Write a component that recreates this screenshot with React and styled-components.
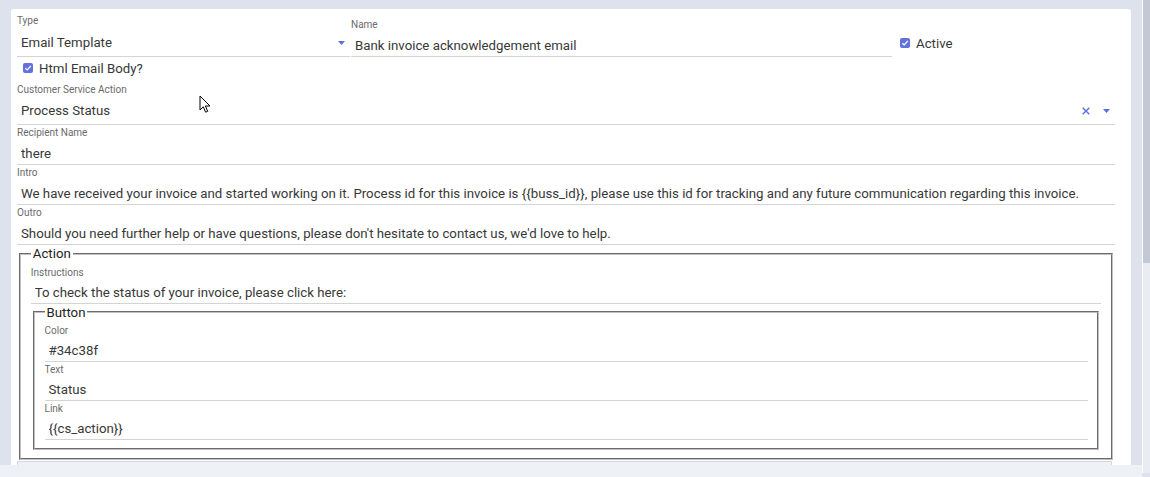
import React from "react";
import styled, { createGlobalStyle } from "styled-components";

const GlobalStyle = createGlobalStyle`
  html, body { margin: 0; padding: 0; }
  body {
    background: #dee2ec;
    font-family: Roboto, "Liberation Sans", Arial, sans-serif;
    overflow: hidden;
  }
`;

const Page = styled.div`
  display: flex;
  height: 477px;
  overflow: hidden;
`;

const Main = styled.div`
  flex: 1;
  min-width: 0;
  padding: 9px 11px 0 11px;
  overflow: hidden;
`;

const Card = styled.div`
  position: relative;
  background: #ffffff;
  border-radius: 3px 3px 0 0;
  padding: 6px 16px 0 6px;
`;

const Row = styled.div`
  display: flex;
  align-items: flex-end;
`;

const Field = styled.div`
  flex: ${(p) => (p.$width ? `0 0 ${p.$width}px` : "1 1 auto")};
  margin-left: ${(p) => p.$ml || 0}px;
  margin-bottom: 1px;
  min-width: 0;
  &:last-child {
    margin-bottom: ${(p) => (p.$nested ? 0 : 1)}px;
  }
`;

const Label = styled.div`
  padding-top: ${(p) => (p.$tight ? 0 : 1)}px;
  font-size: 10px;
  line-height: 12px;
  color: #6b6b6b;
  white-space: nowrap;
`;

const Value = styled.div`
  display: flex;
  align-items: center;
  border-bottom: 1px solid #d4d4d4;
  padding: ${(p) => (p.$nested ? 4 : p.$tight ? 6 : 5)}px 5px ${(p) => (p.$select ? 3 : 0)}px 4px;
  line-height: 20px;
  font-size: 13.25px;
  color: #383838;
  white-space: nowrap;
`;

const ValueText = styled.span`
  flex: 1;
  overflow: hidden;
`;

const Icons = styled.span`
  display: flex;
  align-items: center;
  gap: 13px;
  color: #5a6fe0;
`;

const CheckWrap = styled.label`
  display: flex;
  align-items: center;
  gap: 6px;
  height: 18px;
  font-size: 13.25px;
  color: #383838;
  margin-left: ${(p) => p.$ml || 0}px;
  margin-bottom: ${(p) => p.$mb || 0}px;
`;

const CheckRow = styled.div`
  padding: 1px 0 6px 6px;
`;

const Box = styled.span`
  width: 10px;
  height: 10px;
  border-radius: 2px;
  background: #6272dc;
  display: inline-flex;
  align-items: center;
  justify-content: center;
`;

const Fieldset = styled.fieldset`
  margin: 0 2px;
  padding: 0.35em 0.75em 0.625em;
  font-size: 13px;
  border: 2px groove #c0c0c0;
  min-width: 0;
`;

const Legend = styled.legend`
  padding: 0 2px;
  font-size: 13.25px;
  line-height: 15px;
  color: #222;
`;

const NextPanel = styled.div`
  margin: 1px 3px 0 0;
  height: 20px;
  background: #eef1f6;
  border: 1px solid #d3d7de;
  border-bottom: none;
`;

const BottomBar = styled.div`
  position: fixed;
  left: 0;
  bottom: 0;
  width: 1142px;
  height: 12px;
  background: #eef1f6;
`;

const Scrollbar = styled.div`
  flex: 0 0 8px;
  border-left: 1px solid #ffffff;
  background: #e9ecf2;
  box-sizing: border-box;
  height: 473px;
`;

const Thumb = styled.div`
  height: 263px;
  background: #c3c8d5;
`;

const Cursor = styled.svg`
  position: absolute;
  left: 188px;
  top: 86px;
`;

const Check = () => (
  <Box>
    <svg width="8" height="8" viewBox="0 0 8 8">
      <path d="M1.3 4.2 L3.2 6 L6.8 2" fill="none" stroke="#fff" strokeWidth="1.2" />
    </svg>
  </Box>
);

const Caret = () => (
  <svg width="7" height="4" viewBox="0 0 7 4">
    <path d="M0 0 H7 L3.5 4 Z" fill="#5a6fe0" />
  </svg>
);

const Clear = () => (
  <svg width="8" height="8" viewBox="0 0 8 8">
    <path d="M0.7 0.7 L7.3 7.3 M7.3 0.7 L0.7 7.3" stroke="#5a6fe0" strokeWidth="1.4" />
  </svg>
);

const TextField = ({ label, value, width, ml, nested }) => (
  <Field $width={width} $ml={ml} $nested={nested}>
    <Label>{label}</Label>
    <Value $nested={nested}>
      <ValueText>{value}</ValueText>
    </Value>
  </Field>
);

const SelectField = ({ label, value, width, clearable, tight }) => (
  <Field $width={width}>
    <Label $tight={tight}>{label}</Label>
    <Value $select $tight={tight}>
      <ValueText>{value}</ValueText>
      <Icons>
        {clearable && <Clear />}
        <Caret />
      </Icons>
    </Value>
  </Field>
);

export default function App() {
  return (
    <>
      <GlobalStyle />
      <Page>
        <Main>
          <Card>
            <Row>
              <SelectField label="Type" value="Email Template" width={333} tight />
              <TextField label="Name" value="Bank invoice acknowledgement email" width={541} ml={1} />
              <CheckWrap $ml={8} $mb={6}>
                <Check />
                Active
              </CheckWrap>
            </Row>
            <CheckRow>
              <CheckWrap>
                <Check />
                Html Email Body?
              </CheckWrap>
            </CheckRow>
            <SelectField label="Customer Service Action" value="Process Status" clearable />
            <TextField label="Recipient Name" value="there" />
            <TextField
              label="Intro"
              value="We have received your invoice and started working on it. Process id for this invoice is {{buss_id}}, please use this id for tracking and any future communication regarding this invoice."
            />
            <TextField
              label="Outro"
              value="Should you need further help or have questions, please don't hesitate to contact us, we'd love to help."
            />
            <Fieldset>
              <Legend>Action</Legend>
              <TextField nested label="Instructions" value="To check the status of your invoice, please click here:" />
              <Fieldset>
                <Legend>Button</Legend>
                <TextField nested label="Color" value="#34c38f" />
                <TextField nested label="Text" value="Status" />
                <TextField nested label="Link" value="{{cs_action}}" />
              </Fieldset>
            </Fieldset>
            <NextPanel />
            <Cursor width="13" height="19" viewBox="0 0 13 19">
              <path
                d="M1 1 L1 15 L4.3 11.8 L6.6 17.2 L8.7 16.3 L6.4 11 L11 11 Z"
                fill="#fff"
                stroke="#000"
                strokeWidth="1"
                strokeLinejoin="miter"
              />
            </Cursor>
          </Card>
        </Main>
        <Scrollbar>
          <Thumb />
        </Scrollbar>
      </Page>
      <BottomBar />
    </>
  );
}
